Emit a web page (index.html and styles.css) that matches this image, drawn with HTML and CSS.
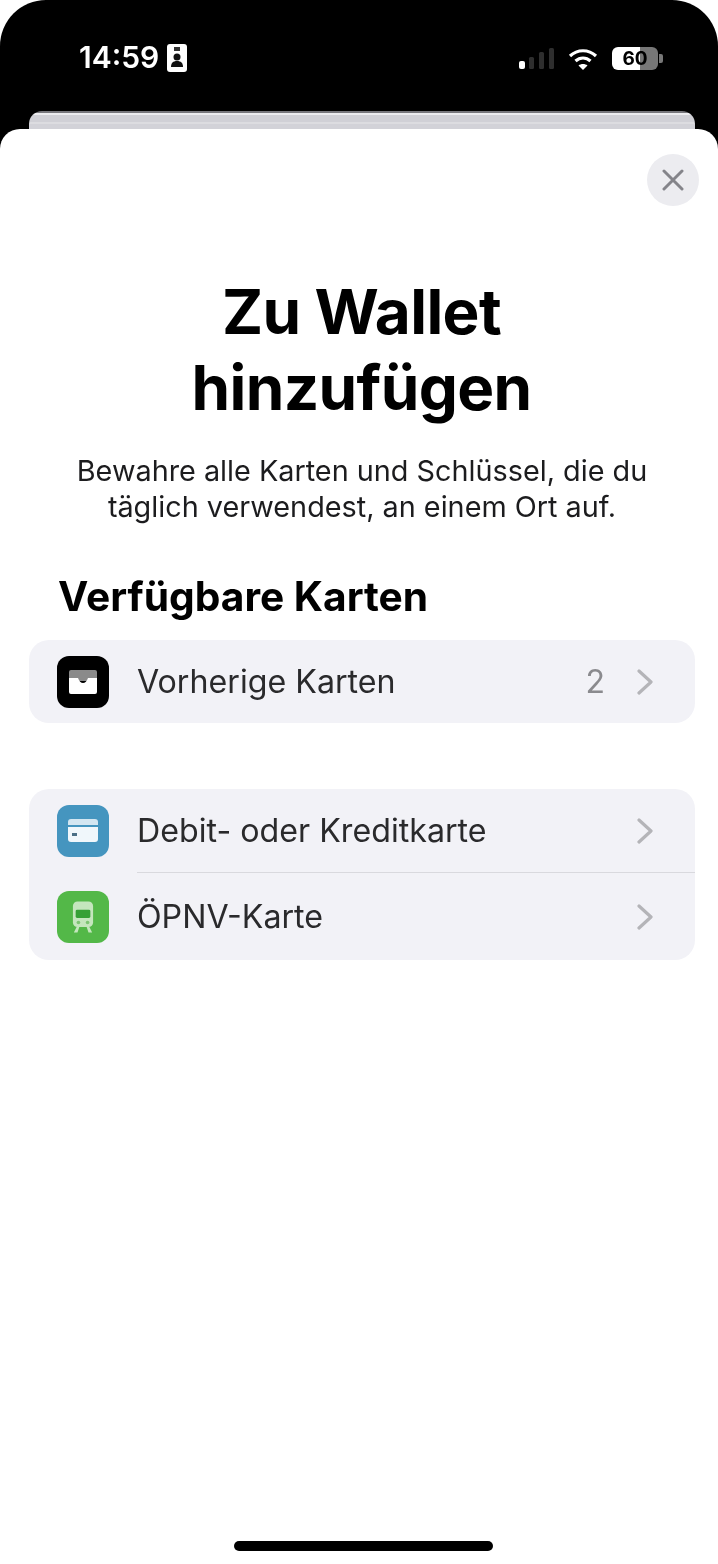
FILE: index.html
```html
<!DOCTYPE html>
<html lang="de">
<head>
    <meta charset="UTF-8">
    <meta name="viewport" content="width=device-width, initial-scale=1.0">
    <title>Zu Wallet hinzufügen</title>
    <link rel="stylesheet" href="styles.css">
</head>
<body>
    <div class="phone">
        <div class="status-bar">
            <div class="status-left">
                <span class="time">14:59</span>
                <svg class="id-icon" width="20" height="28" viewBox="0 0 20 28">
                    <rect width="20" height="28" rx="3" fill="#fff"/>
                    <rect x="7" y="3" width="6" height="4" fill="#333"/>
                    <circle cx="10" cy="13" r="3.500" fill="#111"/>
                    <path d="M4 23c0-4 2-6 6-6s6 2 6 6z" fill="#111"/>
                </svg>
            </div>
            <div class="status-right">
                <svg width="35" height="21" viewBox="0 0 35 21">
                    <rect x="0" y="13" width="6" height="8" rx="2" fill="#fff"/>
                    <rect x="10" y="9" width="5" height="12" rx="1.500" fill="#2e2e2e"/>
                    <rect x="20" y="4" width="5" height="17" rx="1.500" fill="#2e2e2e"/>
                    <rect x="30" y="0" width="5" height="21" rx="1.500" fill="#2e2e2e"/>
                </svg>
                <svg class="wifi" width="30" height="22" viewBox="0 0 30 22" fill="none" stroke="#fff" stroke-width="3.200">
                    <path d="M2 8c7.500-7 18.500-7 26 0"/>
                    <path d="M7.500 13c4.500-4 10.500-4 15 0"/>
                    <path d="M15 22l-4.500-4.500c2.500-2 6.500-2 9 0z" fill="#fff" stroke="none"/>
                </svg>
                <div class="battery">
                    <div class="battery-body"><span>60</span></div>
                    <div class="battery-cap"></div>
                </div>
            </div>
        </div>
        <div class="peek-card"></div>

        <div class="sheet">
            <div class="sheet-top">
                <button class="close-btn" aria-label="Schließen">
                    <svg width="22" height="22" viewBox="0 0 22 22" fill="none" stroke="#84848a" stroke-width="3" stroke-linecap="round">
                        <path d="M2 2l18 18M20 2L2 20"/>
                    </svg>
                </button>
            </div>

            <h1 class="title">Zu Wallet<br>hinzufügen</h1>
            <p class="subtitle">Bewahre alle Karten und Schlüssel, die du<br>täglich verwendest, an einem Ort auf.</p>

            <h2 class="section-title">Verfügbare Karten</h2>

            <div class="group">
                <div class="row">
                    <div class="row-icon icon-black">
                        <svg width="30" height="24" viewBox="0 0 30 24">
                            <path d="M3 0h24a2 2 0 0 1 2 2v9H1V2a2 2 0 0 1 2-2z" fill="#8a8a8a"/>
                            <path d="M1 8h9c1 3 3 5 5 5s4-2 5-5h9v14a2 2 0 0 1-2 2H3a2 2 0 0 1-2-2z" fill="#fff"/>
                        </svg>
                    </div>
                    <span class="row-label">Vorherige Karten</span>
                    <span class="row-count">2</span>
                    <svg class="chevron" width="16" height="26" viewBox="0 0 16 26" fill="none" stroke="#b4b4b8" stroke-width="3.200" stroke-linecap="round" stroke-linejoin="round">
                        <path d="M2 2l12 11L2 24"/>
                    </svg>
                </div>
            </div>

            <div class="group">
                <div class="row">
                    <div class="row-icon icon-blue">
                        <svg width="30" height="23" viewBox="0 0 30 23">
                            <path d="M3 0h24a3 3 0 0 1 3 3v3H0V3a3 3 0 0 1 3-3z" fill="#d3e6f1"/>
                            <path d="M0 8h30v12a3 3 0 0 1-3 3H3a3 3 0 0 1-3-3z" fill="#f0f7fb"/>
                            <rect x="4" y="14" width="5" height="3" fill="#4a6f85"/>
                        </svg>
                    </div>
                    <span class="row-label">Debit- oder Kreditkarte</span>
                    <svg class="chevron" width="16" height="26" viewBox="0 0 16 26" fill="none" stroke="#b4b4b8" stroke-width="3.200" stroke-linecap="round" stroke-linejoin="round">
                        <path d="M2 2l12 11L2 24"/>
                    </svg>
                </div>
                <div class="divider"></div>
                <div class="row row-tall">
                    <div class="row-icon icon-green">
                        <svg width="22" height="32" viewBox="0 0 24 34">
                            <rect x="1" y="0" width="22" height="28" rx="5" fill="#c4e6bd"/>
                            <rect x="4" y="9" width="16" height="9" rx="1.500" fill="#35a035"/>
                            <circle cx="7" cy="23" r="2" fill="#7cc472"/>
                            <circle cx="17" cy="23" r="2" fill="#7cc472"/>
                            <path d="M5 28l-3 6h4l2-6zM19 28l3 6h-4l-2-6z" fill="#c4e6bd"/>
                        </svg>
                    </div>
                    <span class="row-label">ÖPNV-Karte</span>
                    <svg class="chevron" width="16" height="26" viewBox="0 0 16 26" fill="none" stroke="#b4b4b8" stroke-width="3.200" stroke-linecap="round" stroke-linejoin="round">
                        <path d="M2 2l12 11L2 24"/>
                    </svg>
                </div>
            </div>

            <div class="home-bar"></div>
        </div>
    </div>
</body>
</html>
```

FILE: styles.css
```css
* {
    box-sizing: border-box;
}
html, body {
    margin: 0;
    padding: 0;
    background: #fff;
}
body {
    font-family: Inter, "Liberation Sans", sans-serif;
    color: #1c1c1e;
}
/* the source shot is a soft upscale, hence the small blur */
.phone {
    width: 718px;
    height: 1564px;
    background: linear-gradient(#000 200px, #fff 200px);
    border-radius: 46px;
    overflow: hidden;
    display: flex;
    flex-direction: column;
    filter: blur(0.6px);
}

/* status bar */
.status-bar {
    height: 111px;
    flex-shrink: 0;
    padding: 43px 55px 0 79px;
    display: flex;
    justify-content: space-between;
    align-items: flex-start;
}
.status-left {
    display: flex;
    align-items: center;
    gap: 8px;
}
.time {
    color: #fff;
    font-size: 30px;
    line-height: 29px;
    font-weight: 600;
}
.status-right {
    display: flex;
    align-items: center;
    gap: 14px;
    padding-top: 4px;
}
.battery {
    display: flex;
    align-items: center;
    gap: 1px;
}
.battery-body {
    width: 46px;
    height: 23px;
    border-radius: 6px;
    background: linear-gradient(to right, #fff 60%, #777 60%);
    display: flex;
    align-items: center;
    justify-content: center;
}
.battery-body span {
    color: #000;
    font-size: 19px;
    font-weight: 700;
}
.battery-cap {
    width: 4px;
    height: 9px;
    border-radius: 0 2px 2px 0;
    background: #777;
}

.peek-card {
    height: 18px;
    flex-shrink: 0;
    margin: 0 23px 0 29px;
    background: linear-gradient(#77777c 2px, #ececef 2px, #ececef 4px, #d0d0d6 4px, #d0d0d6 11px, #dcdce0 11px, #dcdce0 13px, #d2d2d8 13px);
    border-radius: 13px 13px 0 0;
}

/* sheet */
.sheet {
    flex: 1;
    background: #fff;
    border-radius: 20px 20px 0 0;
    display: flex;
    flex-direction: column;
    padding: 25px 23px 13px 29px;
}
.sheet-top {
    display: flex;
    justify-content: flex-end;
    margin-right: -4px;
}
.close-btn {
    width: 52px;
    height: 52px;
    border: none;
    padding: 0;
    border-radius: 50%;
    background: #ececf0;
    display: flex;
    align-items: center;
    justify-content: center;
}
.title {
    margin: 68px 1px 0 0;
    font-size: 62px;
    line-height: 76px;
    font-weight: 700;
    letter-spacing: -0.6px;
    color: #000;
    text-align: center;
}
.subtitle {
    margin: 27px 0 0;
    font-size: 28.8px;
    line-height: 36px;
    text-align: center;
    color: #1c1c1e;
}
.section-title {
    margin: 47px 0 0 29px;
    font-size: 40.700px;
    line-height: 50px;
    font-weight: 700;
    color: #000;
}
.group {
    background: #f2f2f7;
    border-radius: 20px;
    margin-bottom: 66px;
}
.section-title + .group {
    margin-top: 18px;
}
.row {
    height: 83px;
    padding: 0 42px 0 28px;
    display: flex;
    align-items: center;
}
.row-tall {
    height: 87px;
}
.row-icon {
    width: 52px;
    height: 52px;
    border-radius: 12px;
    flex-shrink: 0;
    display: flex;
    align-items: center;
    justify-content: center;
}
.icon-black {
    background: #000;
}
.icon-blue {
    background: #4595bf;
}
.icon-green {
    background: #53b848;
}
.row-label {
    margin-left: 28px;
    flex: 1;
    font-size: 32.200px;
    color: #2a2a2c;
}
.row-count {
    font-size: 32px;
    color: #8a8a8e;
    margin-right: 32px;
}
.divider {
    height: 1px;
    margin-left: 108px;
    background: #d9d9de;
}
.home-bar {
    width: 259px;
    height: 10px;
    border-radius: 5px;
    background: #000;
    margin: auto auto 0;
    position: relative;
    left: 1px;
}
```
